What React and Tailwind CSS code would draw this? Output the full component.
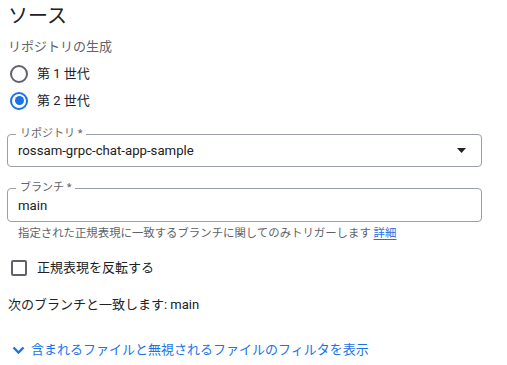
import React, { useState } from 'react'

const font = { fontFamily: 'Roboto, "Noto Sans CJK JP", sans-serif' }

const Radio = ({ checked, label, onClick }) => (
  <div className="flex items-center h-[27px] cursor-pointer" onClick={onClick}>
    <span
      className={
        'ml-[3px] w-[18px] h-[18px] rounded-full border-2 flex items-center justify-center ' +
        (checked ? 'border-[#1a73e8]' : 'border-[#5f6368]')
      }
    >
      {checked && <span className="w-[9px] h-[9px] rounded-full bg-[#1a73e8]" />}
    </span>
    <span className="ml-[9px] text-[13px] text-[#202124]">{label}</span>
  </div>
)

const OutlinedField = ({ label, value, height, dropdown }) => (
  <div className={'relative w-[475px] border border-[#9aa0a6] rounded-[4px] flex items-center pl-[10px] pr-[15px] ' + height}>
    <span className="absolute left-[8px] -top-[7px] px-[4px] bg-white text-[11px] leading-[12px] text-[#5f6368]">
      {label}
    </span>
    <span className="flex-1 text-[13.2px] text-[#202124] pt-[1px]">{value}</span>
    {dropdown && (
      <svg width="9" height="5" viewBox="0 0 9 5">
        <polygon points="0,0 9,0 4.5,5" fill="#202124" />
      </svg>
    )}
  </div>
)

export default function App() {
  const [gen, setGen] = useState(2)
  const [invert, setInvert] = useState(false)

  return (
    <div className="w-[507px] h-[365px] bg-white pl-[7px] pt-[4px]" style={font}>
      <h2 className="ml-px text-[20px] leading-[24px] text-[#202124]">ソース</h2>

      <p className="ml-px mt-[11px] text-[13px] leading-[16px] text-[#5f6368]">リポジトリの生成</p>

      <div className="mt-[5px]">
        <Radio checked={gen === 1} label="第 1 世代" onClick={() => setGen(1)} />
        <Radio checked={gen === 2} label="第 2 世代" onClick={() => setGen(2)} />
      </div>

      <div className="mt-[20px]">
        <OutlinedField label="リポジトリ *" value="rossam-grpc-chat-app-sample" height="h-[33px]" dropdown />
      </div>

      <div className="mt-[21px]">
        <OutlinedField label="ブランチ *" value="main" height="h-[34px]" />
      </div>

      <p className="mt-[3px] pl-[11px] text-[11.4px] leading-[16px] text-[#5f6368]">
        指定された正規表現に一致するブランチに関してのみトリガーします{' '}
        <a className="text-[#1a73e8] underline underline-offset-2">詳細</a>
      </p>

      <div className="mt-[15px] h-[24px] flex items-center cursor-pointer" onClick={() => setInvert(!invert)}>
        <span className={'ml-[4px] w-[16px] h-[16px] border-2 rounded-[2px] ' + (invert ? 'border-[#1a73e8] bg-[#1a73e8]' : 'border-[#5f6368]')} />
        <span className="ml-[10px] text-[13px] text-[#202124]">正規表現を反転する</span>
      </div>

      <p className="ml-px mt-[17px] text-[13px] leading-[16px] text-[#202124]">次のブランチと一致します: main</p>

      <div className="mt-[29px] flex items-center h-[16px] text-[#1a73e8]">
        <svg className="ml-[5px]" width="13" height="8" viewBox="0 0 13 8">
          <path d="M1.5 1.5 L6.5 6.5 L11.5 1.5" fill="none" stroke="#1a73e8" strokeWidth="2.4" />
        </svg>
        <span className="ml-[6px] text-[13px] leading-[16px]">含まれるファイルと無視されるファイルのフィルタを表示</span>
      </div>
    </div>
  )
}
